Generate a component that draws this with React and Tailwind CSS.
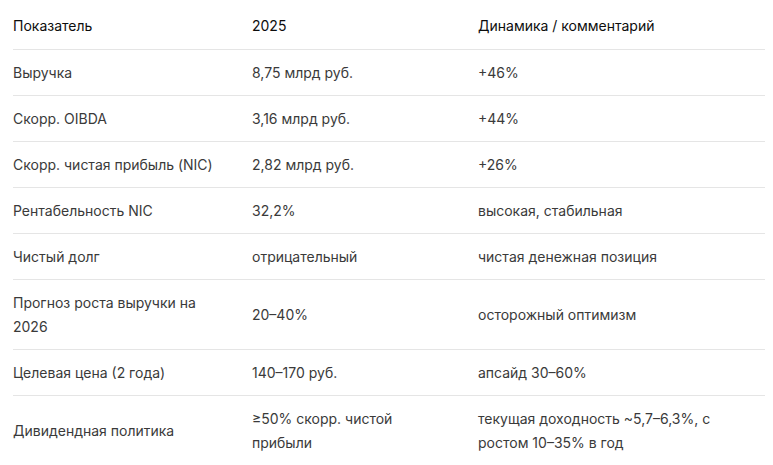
const rows = [
  { name: ["Выручка"], value: ["8,75 млрд руб."], note: ["+46%"] },
  { name: ["Скорр. OIBDA"], value: ["3,16 млрд руб."], note: ["+44%"] },
  { name: ["Скорр. чистая прибыль (NIC)"], value: ["2,82 млрд руб."], note: ["+26%"] },
  { name: ["Рентабельность NIC"], value: ["32,2%"], note: ["высокая, стабильная"] },
  { name: ["Чистый долг"], value: ["отрицательный"], note: ["чистая денежная позиция"] },
  { name: ["Прогноз роста выручки на", "2026"], value: ["20–40%"], note: ["осторожный оптимизм"] },
  { name: ["Целевая цена (2 года)"], value: ["140–170 руб."], note: ["апсайд 30–60%"] },
  {
    name: ["Дивидендная политика"],
    value: ["≥50% скорр. чистой", "прибыли"],
    note: ["текущая доходность ~5,7–6,3%, с", "ростом 10–35% в год"],
  },
]

function Cell({ lines, className }) {
  return (
    <div className={`flex flex-col justify-center ${className}`}>
      {lines.map((line, i) => (
        <span key={i} className="whitespace-nowrap">{line}</span>
      ))}
    </div>
  )
}

export default function App() {
  return (
    <div className="min-h-[465px] bg-white pl-[13px] pr-2 pt-[3px] font-['Inter','Noto_Sans',sans-serif] text-[14px] leading-[24px]">
      <div className="w-[752px]">
        <div className="grid grid-cols-[239px_226px_287px] border-b border-[#e5e5e5] py-[11px] text-[#0d0d0d]">
          <div>Показатель</div>
          <div>2025</div>
          <div>Динамика / комментарий</div>
        </div>
        {rows.map((row, i) => (
          <div
            key={i}
            className={`grid grid-cols-[239px_226px_287px] py-[10.5px] text-[#3a3a3a] ${i < rows.length - 1 ? "border-b border-[#e5e5e5]" : ""}`}
          >
            <Cell lines={row.name} />
            <Cell lines={row.value} />
            <Cell lines={row.note} />
          </div>
        ))}
      </div>
    </div>
  )
}
